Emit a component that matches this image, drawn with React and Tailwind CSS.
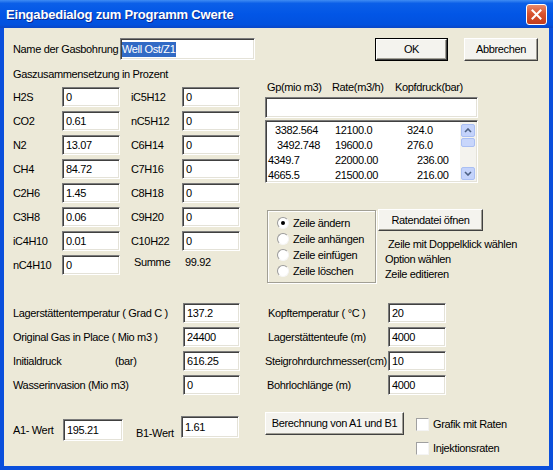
import React from "react";

const Edit = ({ w, h = "h-[20px]", children }) => (
  <div
    className={`${w} ${h} shrink-0 bg-white border border-t-[#7b7b7b] border-l-[#7b7b7b] border-r-white border-b-white shadow-[inset_1px_1px_0_#404040,inset_-1px_-1px_0_#e4e2d8] flex items-center pl-[3px]`}
  >
    {children}
  </div>
);

const Btn = ({ w, h, def, children }) => (
  <div className={`${w} ${h} shrink-0 ${def ? "border border-black" : ""}`}>
    <div className="h-full w-full flex items-center justify-center bg-[#f4f3ee] border border-t-white border-l-white border-r-[#404040] border-b-[#404040] shadow-[inset_-1px_-1px_0_#a19f95]">
      {children}
    </div>
  </div>
);

const Radio = ({ on, label }) => (
  <div className="h-[16px] flex items-center">
    <div className="w-[12px] h-[12px] shrink-0 rounded-full bg-white border border-t-[#9a9a9a] border-l-[#9a9a9a] border-r-[#f6f6f6] border-b-[#f6f6f6] flex items-center justify-center">
      {on && <div className="w-[4px] h-[4px] rounded-full bg-black" />}
    </div>
    <span className="ml-[4px]">{label}</span>
  </div>
);

const Check = ({ label }) => (
  <div className="h-[13px] flex items-center">
    <div className="w-[13px] h-[13px] shrink-0 bg-white border border-t-[#a0a0a0] border-l-[#a0a0a0] border-r-[#f4f4f4] border-b-[#f4f4f4]" />
    <span className="ml-[4px]">{label}</span>
  </div>
);

const Arrow = ({ down }) => (
  <div className="w-[14px] h-[13px] rounded-[2px] bg-[#c4d3fb] border border-[#aabff3] flex items-center justify-center">
    <svg width="8" height="5" viewBox="0 0 8 5">
      <path
        d={down ? "M1 1 L4 4 L7 1" : "M1 4 L4 1 L7 4"}
        fill="none"
        stroke="#4d6185"
        strokeWidth="1.6"
      />
    </svg>
  </div>
);

export default function App() {
  const leftGas = [
    ["H2S", "0"],
    ["CO2", "0.61"],
    ["N2", "13.07"],
    ["CH4", "84.72"],
    ["C2H6", "1.45"],
    ["C3H8", "0.06"],
    ["iC4H10", "0.01"],
    ["nC4H10", "0"],
  ];
  const rightGas = [
    ["iC5H12", "0"],
    ["nC5H12", "0"],
    ["C6H14", "0"],
    ["C7H16", "0"],
    ["C8H18", "0"],
    ["C9H20", "0"],
    ["C10H22", "0"],
  ];

  const rates = [
    { a: "3382.564", pad: "pl-[8px]", b: "12100.0", bw: "w-[72px]", c: "324.0" },
    { a: "3492.748", pad: "pl-[10px]", b: "19600.0", bw: "w-[72px]", c: "276.0" },
    { a: "4349.7", pad: "pl-[1px]", b: "22000.00", bw: "w-[82px]", c: "236.00" },
    { a: "4665.5", pad: "pl-[1px]", b: "21500.00", bw: "w-[82px]", c: "216.00" },
  ];

  const reservoir = [
    ["Lagerstättentemperatur ( Grad C )", "137.2"],
    ["Original Gas in Place ( Mio m3 )", "24400"],
    ["Initialdruck", "616.25"],
    ["Wasserinvasion (Mio m3)", "0"],
  ];
  const well = [
    ["Kopftemperatur ( °C )", "20", "pl-[3px]"],
    ["Lagerstättenteufe (m)", "4000", "pl-[3px]"],
    ["Steigrohrdurchmesser(cm)", "10", "pl-0"],
    ["Bohrlochlänge (m)", "4000", "pl-[2px]"],
  ];

  return (
    <div className="w-[553px] h-[470px] bg-[#0a4fdc] flex flex-col font-['Liberation_Sans',Arial,sans-serif] text-[11px] tracking-[-0.35px] text-black leading-[13px] whitespace-nowrap overflow-hidden">
      {/* title bar */}
      <div className="h-[28px] shrink-0 flex items-center pl-[6px] pr-[6px] bg-[linear-gradient(to_bottom,#3f8cf3_0%,#0b5fe8_12%,#0256e6_50%,#0251de_88%,#0a46c6_100%)]">
        <span className="text-white font-bold text-[13px] tracking-[-0.2px] [text-shadow:1px_1px_0_#0b2a8f]">
          Eingabedialog zum Programm Cwerte
        </span>
        <div className="ml-auto w-[21px] h-[21px] rounded-[3px] border border-white bg-[linear-gradient(to_bottom,#e98a6c,#d8532f_45%,#c23d1e)] flex items-center justify-center">
          <svg width="11" height="11" viewBox="0 0 11 11">
            <path d="M1.5 1.5 L9.5 9.5 M9.5 1.5 L1.5 9.5" stroke="white" strokeWidth="2" strokeLinecap="square" />
          </svg>
        </div>
      </div>

      {/* client area */}
      <div className="flex-1 mx-[4px] mb-[4px] bg-[#ece9d8] pl-[9px] flex flex-col">
        {/* row 1 */}
        <div className="flex items-start mt-[10px]">
          <div className="w-[107px] h-[22px] flex items-center">Name der Gasbohrung</div>
          <div className="w-[135px] h-[22px] shrink-0 bg-white border border-t-[#7b7b7b] border-l-[#7b7b7b] border-r-white border-b-white shadow-[inset_1px_1px_0_#404040,inset_-1px_-1px_0_#e4e2d8] flex items-center pl-[1px]">
            <span className="bg-[#316ac5] text-white leading-[15px] pr-[1px]">Well Ost/Z1</span>
          </div>
          <div className="ml-[120px]">
            <Btn w="w-[73px]" h="h-[23px]" def>
              OK
            </Btn>
          </div>
          <div className="ml-[16px]">
            <Btn w="w-[74px]" h="h-[23px]">Abbrechen</Btn>
          </div>
        </div>

        {/* middle section */}
        <div className="flex items-start">
          <div className="w-[228px] shrink-0">
            <div className="mt-[7px] h-[13px]">Gaszusammensetzung in Prozent</div>
            <div className="mt-[6px] flex flex-col gap-[4px]">
              {leftGas.map(([l, v], i) => (
                <div key={l} className="flex items-center h-[20px]">
                  <div className="w-[49px]">{l}</div>
                  <Edit w="w-[58px]">{v}</Edit>
                  <div className="w-[11px]" />
                  {rightGas[i] ? (
                    <>
                      <div className="w-[51px]">{rightGas[i][0]}</div>
                      <Edit w="w-[58px]">{rightGas[i][1]}</Edit>
                    </>
                  ) : (
                    <>
                      <div className="w-[51px] pl-[3px] mt-[-6px]">Summe</div>
                      <div className="pl-[3px] mt-[-6px]">99.92</div>
                    </>
                  )}
                </div>
              ))}
            </div>
          </div>

          <div className="ml-[24px] w-[218px] shrink-0">
            <div className="mt-[20px] h-[13px] flex pl-[2px]">
              <span className="w-[65px]">Gp(mio m3)</span>
              <span className="w-[63px]">Rate(m3/h)</span>
              <span>Kopfdruck(bar)</span>
            </div>
            <div className="mt-[3px]">
              <Edit w="w-[213px]" h="h-[21px]" />
            </div>
            <div className="mt-[2px] w-[213px] h-[63px] bg-white border border-t-[#7b7b7b] border-l-[#7b7b7b] border-r-white border-b-white shadow-[inset_1px_1px_0_#404040,inset_-1px_-1px_0_#e4e2d8] flex p-[1px]">
              <div className="flex-1 pt-[1px]">
                {rates.map((r) => (
                  <div key={r.a} className="h-[15px] flex items-center">
                    <span className={`w-[68px] ${r.pad}`}>{r.a}</span>
                    <span className={r.bw}>{r.b}</span>
                    <span>{r.c}</span>
                  </div>
                ))}
              </div>
              <div className="w-[16px] bg-[#f4f3ee] flex flex-col items-center pt-[2px] pb-[1px]">
                <Arrow />
                <div className="mt-[1px] w-[14px] h-[9px] rounded-[2px] bg-[#c8d6fb] border border-[#aabff3]" />
                <div className="flex-1" />
                <Arrow down />
              </div>
            </div>

            <div className="mt-[26px] flex items-start">
              <div className="mt-[1px] ml-[2px] w-[109px] shrink-0 h-[73px] border border-[#a19f94] shadow-[1px_1px_0_#fff,inset_1px_1px_0_#fff] pt-[4px] pl-[9px]">
                <Radio on label="Zeile ändern" />
                <Radio label="Zeile anhängen" />
                <Radio label="Zeile einfügen" />
                <Radio label="Zeile löschen" />
              </div>
              <div className="ml-[2px]">
                <Btn w="w-[105px]" h="h-[22px]">Ratendatei öfnen</Btn>
                <div className="mt-[6px] h-[15px] leading-[15px] pl-[10px]">
                  Zeile mit Doppelklick wählen
                </div>
                <div className="h-[15px] leading-[15px] pl-[7px]">Option wählen</div>
                <div className="h-[15px] leading-[15px] pl-[7px]">Zeile editieren</div>
              </div>
            </div>
          </div>
        </div>

        {/* reservoir / well data */}
        <div className="mt-[20px] flex items-start">
          <div className="w-[228px] shrink-0 flex flex-col gap-[4px]">
            {reservoir.map(([l, v]) => (
              <div key={l} className="h-[20px] flex items-center">
                <div className="w-[170px] shrink-0 flex">
                  {l === "Initialdruck" ? (
                    <>
                      <span className="w-[102px]">Initialdruck</span>
                      <span>(bar)</span>
                    </>
                  ) : (
                    l
                  )}
                </div>
                <Edit w="w-[57px]">{v}</Edit>
              </div>
            ))}
          </div>
          <div className="ml-[24px] flex flex-col gap-[4px]">
            {well.map(([l, v, p]) => (
              <div key={l} className="h-[20px] flex items-center">
                <div className={`w-[123px] shrink-0 ${p}`}>{l}</div>
                <Edit w="w-[58px]">{v}</Edit>
              </div>
            ))}
          </div>
        </div>

        {/* A1 / B1 row */}
        <div className="mt-[17px] flex items-start">
          <div className="w-[50px] shrink-0 mt-[12px] h-[13px]">A1- Wert</div>
          <div className="mt-[7px]">
            <Edit w="w-[60px]" h="h-[22px]">195.21</Edit>
          </div>
          <div className="ml-[13px] w-[45px] shrink-0 mt-[15px] h-[13px]">B1-Wert</div>
          <div className="mt-[4px]">
            <Edit w="w-[58px]" h="h-[22px]">1.61</Edit>
          </div>
          <div className="ml-[26px]">
            <Btn w="w-[139px]" h="h-[23px]">Berechnung von A1 und B1</Btn>
          </div>
          <div className="ml-[12px] mt-[6px] flex flex-col gap-[11px]">
            <Check label="Grafik mit Raten" />
            <Check label="Injektionsraten" />
          </div>
        </div>
      </div>
    </div>
  );
}
